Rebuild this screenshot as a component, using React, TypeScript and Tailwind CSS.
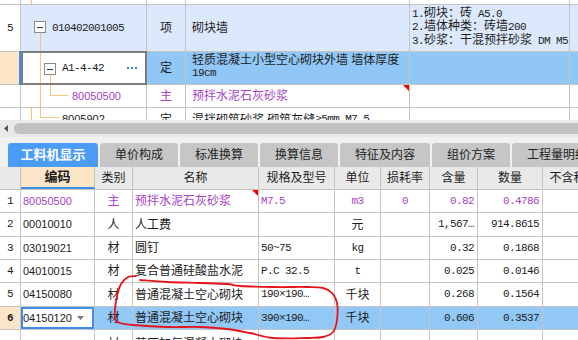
import React from "react";

const line = "border-[#c4c4c4]";
const purple = "text-[#a443c8]";
const mono = "font-['Liberation_Mono','Noto_Sans_CJK_SC',monospace] text-[11px] tracking-[-0.6px]";

function Cell({
  w,
  className = "",
  children,
}: {
  w: string;
  className?: string;
  children?: React.ReactNode;
}) {
  return (
    <div
      className={`${w} relative shrink-0 h-full border-r ${line} flex items-center overflow-hidden whitespace-nowrap ${className}`}
    >
      {children}
    </div>
  );
}

const RedMark = () => (
  <span className="absolute top-0 right-0 w-0 h-0 border-t-[6px] border-l-[6px] border-t-[#f00000] border-l-transparent" />
);

// ---------- top tree grid ----------
const TW = ["w-[21px]", "w-[126px]", "w-[39px]", "w-[224px]", "w-[160px]", "w-[20px]"];

function TreeLines() {
  const c = "#f8c47a";
  return (
    <svg className="absolute left-0 top-0 pointer-events-none" width="150" height="120">
      <line x1="31.5" y1="0" x2="31.5" y2="5" stroke={c} />
      <line x1="31.5" y1="108" x2="31.5" y2="120" stroke={c} />
      <line x1="40.5" y1="33" x2="40.5" y2="117.5" stroke={c} />
      <line x1="40.5" y1="117.5" x2="59" y2="117.5" stroke={c} />
      <line x1="50.5" y1="75" x2="50.5" y2="95.5" stroke={c} />
      <line x1="50.5" y1="95.5" x2="68" y2="95.5" stroke={c} />
      <rect x="34.5" y="21.5" width="11" height="11" fill="#fff" stroke="#8a8a8a" />
      <line x1="37" y1="27.5" x2="43" y2="27.5" stroke="#333" />
      <rect x="44.5" y="63.5" width="11" height="11" fill="#fff" stroke="#8a8a8a" />
      <line x1="47" y1="69.5" x2="53" y2="69.5" stroke="#333" />
    </svg>
  );
}

function TopGrid() {
  return (
    <div className="relative h-[120px] overflow-hidden">
      {/* partial row above */}
      <div className={`flex h-[5px] border-b ${line}`}>
        {TW.map((w, i) => (
          <Cell key={i} w={w} />
        ))}
      </div>
      {/* row 5 */}
      <div className={`flex h-[47px] border-b ${line} bg-[#dce8fb]`}>
        <Cell w={TW[0]} className={`justify-center bg-white ${mono}`}>5</Cell>
        <Cell w={TW[1]} className={`pl-[31px] ${mono}`}>010402001005</Cell>
        <Cell w={TW[2]} className="justify-center">项</Cell>
        <Cell w={TW[3]} className="pl-[6px]">砌块墙</Cell>
        <Cell w={TW[4]} className="pl-[2px] font-['Liberation_Mono','Noto_Sans_CJK_SC',monospace]">
          <div className="leading-[13.5px]">
            <div><span className={mono}>1.</span>砌块：砖<span className={mono}> A5.0</span></div>
            <div><span className={mono}>2.</span>墙体种类：砖墙<span className={mono}>200</span></div>
            <div><span className={mono}>3.</span>砂浆：干混预拌砂浆<span className={mono}> DM M5</span></div>
          </div>
        </Cell>
        <Cell w={TW[5]} />
      </div>
      {/* A1-4-42 */}
      <div className={`flex h-[33px] border-b ${line} bg-[#91c7f6]`}>
        <Cell w={TW[0]} className="bg-[#fde6c8]" />
        <Cell w={TW[1]} className={`pl-[41px] pr-[9px] bg-white ${mono}`}>
          A1-4-42
          <span className="ml-auto flex gap-[2px]">
            <span className="w-[2px] h-[2px] bg-[#3a8be3]" />
            <span className="w-[2px] h-[2px] bg-[#3a8be3]" />
            <span className="w-[2px] h-[2px] bg-[#3a8be3]" />
          </span>
        </Cell>
        <Cell w={TW[2]} className="justify-center">定</Cell>
        <Cell w={TW[3]} className="pl-[6px] items-start pt-[2px] overflow-visible">
          <div className="leading-[13px]">
            <div>轻质混凝土小型空心砌块外墙 墙体厚度</div>
            <div className={mono}>19cm</div>
          </div>
        </Cell>
        <Cell w={TW[4]} />
        <Cell w={TW[5]} />
      </div>
      {/* 80050500 */}
      <div className={`flex h-[23px] border-b ${line}`}>
        <Cell w={TW[0]} />
        <Cell w={TW[1]} className={`pl-[51px] ${purple} font-['Liberation_Sans'] text-[11px]`}>80050500</Cell>
        <Cell w={TW[2]} className={`justify-center ${purple}`}>主</Cell>
        <Cell w={TW[3]} className={`pl-[6px] ${purple}`}>
          预拌水泥石灰砂浆
          <RedMark />
        </Cell>
        <Cell w={TW[4]} />
        <Cell w={TW[5]} />
      </div>
      {/* 8005902 partial, cut by the scroll bar */}
      <div className="flex h-[23px]">
        <Cell w={TW[0]} />
        <Cell w={TW[1]} className="pl-[41px] font-['Liberation_Sans'] text-[11px]">8005902</Cell>
        <Cell w={TW[2]} className="justify-center">定</Cell>
        <Cell w={TW[3]} className="pl-[6px] overflow-visible">
          混拌砌筑砂浆 砌筑灰缝<span className={mono}>≥5mm M7.5</span>
        </Cell>
        <Cell w={TW[4]} />
        <Cell w={TW[5]} />
      </div>
      <TreeLines />
      {/* selected cell frame */}
      <div className="absolute left-[21px] top-[51px] w-[126px] h-[34px] border-2 border-[#7d7d7d] pointer-events-none" />
      <div className="absolute left-[19px] top-[51px] w-[2px] h-[34px] bg-[#3f8ff0] pointer-events-none" />
    </div>
  );
}

// ---------- scroll + tabs ----------
function ScrollBar() {
  return (
    <div className="h-[17px] bg-[#e9e9e9] flex items-center">
      <svg className="ml-[4px]" width="4" height="7">
        <path d="M4 0 L0 3.5 L4 7 Z" fill="#555" />
      </svg>
      <div className="ml-[6px] h-[11px] flex-1 rounded-l-full bg-[#c1c1c1]" />
    </div>
  );
}

const tabs = [
  { label: "工料机显示", w: "w-[90px]", active: true },
  { label: "单价构成", w: "w-[78px]" },
  { label: "标准换算", w: "w-[78px]" },
  { label: "换算信息", w: "w-[78px]" },
  { label: "特征及内容", w: "w-[90px]" },
  { label: "组价方案", w: "w-[78px]" },
  { label: "工程量明细", w: "w-[90px]" },
];

function Tabs() {
  return (
    <div className="bg-[#f1f1f1] pt-[6px]">
      <div className="flex gap-[2px] pl-[8px] h-[24px] overflow-hidden">
        {tabs.map((t) => (
          <div
            key={t.label}
            className={`${t.w} shrink-0 h-full rounded-t-[3px] flex items-center justify-center ${
              t.active ? "bg-[#4a9cf6] text-white font-bold text-[13px]" : "bg-[#c6c6c6] text-[#222]"
            }`}
          >
            {t.label}
          </div>
        ))}
      </div>
    </div>
  );
}

// ---------- bottom grid ----------
const BW = ["w-[21px]", "w-[74px]", "w-[38px]", "w-[126px]", "w-[76px]", "w-[46px]", "w-[49px]", "w-[48px]", "w-[65px]", "w-[50px]"];

const heads = ["", "编码", "类别", "名称", "规格及型号", "单位", "损耗率", "含量", "数量", "不含税"];

type Row = {
  n: string;
  code: string;
  kind: string;
  name: string;
  spec: string;
  unit: string;
  loss: string;
  qty: string;
  amt: string;
  h: string;
};

const rows: Row[] = [
  { n: "1", code: "80050500", kind: "主", name: "预拌水泥石灰砂浆", spec: "M7.5", unit: "m3", loss: "0", qty: "0.82", amt: "0.4786", h: "h-[23px]" },
  { n: "2", code: "00010010", kind: "人", name: "人工费", spec: "", unit: "元", loss: "", qty: "1,567…", amt: "914.8615", h: "h-[24px]" },
  { n: "3", code: "03019021", kind: "材", name: "圆钉", spec: "50~75", unit: "kg", loss: "", qty: "0.32", amt: "0.1868", h: "h-[23px]" },
  { n: "4", code: "04010015", kind: "材", name: "复合普通硅酸盐水泥", spec: "P.C 32.5", unit: "t", loss: "", qty: "0.025", amt: "0.0146", h: "h-[23px]" },
  { n: "5", code: "04150080", kind: "材", name: "普通混凝土空心砌块", spec: "190×190…", unit: "千块", loss: "", qty: "0.268", amt: "0.1564", h: "h-[24px]" },
  { n: "6", code: "04150120", kind: "材", name: "普通混凝土空心砌块", spec: "390×190…", unit: "千块", loss: "", qty: "0.606", amt: "0.3537", h: "h-[23px]" },
];

function HeaderRow() {
  return (
    <div className={`flex h-[23px] border-b ${line} bg-[#e9e9e9]`}>
      {heads.map((h, i) => (
        <Cell
          key={i}
          w={BW[i]}
          className={`justify-center ${i === 1 ? "bg-[#fde6c8] font-bold text-[13px] border-b-2 border-b-[#3d8eea]" : ""}`}
        >
          {h}
        </Cell>
      ))}
    </div>
  );
}

function DataRow({ r }: { r: Row }) {
  const p = r.n === "1" ? purple : "";
  const sel = r.n === "6";
  return (
    <div className={`flex ${r.h} border-b ${line} ${sel ? "bg-[#92c8f6]" : ""}`}>
      <Cell
        w={BW[0]}
        className={`justify-center ${mono} ${sel ? "bg-[#fde6c8] font-bold" : "bg-white"}`}
      >
        {r.n}
      </Cell>
      <Cell w={BW[1]} className={`pl-[2px] font-['Liberation_Sans'] text-[11px] ${p} ${sel ? "bg-white" : ""}`}>
        {r.code}
        {sel && (
          <>
            <span className="absolute inset-0 border-2 border-[#3d8eea]" />
            <svg className="absolute left-[56px] top-[9px]" width="7" height="4">
              <path d="M0 0 L7 0 L3.5 4 Z" fill="#777" />
            </svg>
          </>
        )}
      </Cell>
      <Cell w={BW[2]} className={`justify-center ${p}`}>{r.kind}</Cell>
      <Cell w={BW[3]} className={`pl-[2px] ${p}`}>
        {r.name}
        {r.n === "1" && <RedMark />}
      </Cell>
      <Cell w={BW[4]} className={`pl-[2px] ${mono} ${p}`}>{r.spec}</Cell>
      <Cell w={BW[5]} className={`justify-center ${/[a-z]/.test(r.unit) ? mono : ""} ${p}`}>{r.unit}</Cell>
      <Cell w={BW[6]} className={`justify-center ${mono} ${p}`}>{r.loss}</Cell>
      <Cell w={BW[7]} className={`justify-end pr-[3px] ${mono} ${p}`}>{r.qty}</Cell>
      <Cell w={BW[8]} className={`justify-end pr-[3px] ${mono} ${p}`}>{r.amt}</Cell>
      <Cell w={BW[9]} />
    </div>
  );
}

// next row, only its top few pixels show
function CutRow() {
  return (
    <div className="flex h-[23px]">
      {BW.map((w, i) => (
        <Cell key={i} w={w} className={`items-start pt-[5px] ${i === 2 ? "justify-center" : "pl-[2px]"}`}>
          {i === 2 ? "材" : i === 3 ? "蒸压加气混凝土砌块" : ""}
        </Cell>
      ))}
    </div>
  );
}

// ---------- red hand-drawn ring ----------
const ring: [number, number][] = [
  [136, 276], [128, 277], [121, 284], [117, 296], [115, 309], [115, 319], [120, 323],
  [133, 325], [167, 327], [200, 327], [227, 329], [250, 333], [273, 338], [307, 338],
  [323, 337], [333, 332], [337, 320], [337, 303], [332, 293], [323, 288], [307, 287],
  [273, 287], [240, 286], [227, 284], [200, 283], [167, 282], [140, 280],
];

function smooth(p: [number, number][]) {
  let d = `M${p[0][0]} ${p[0][1]}`;
  for (let i = 0; i < p.length - 1; i++) {
    const p0 = p[i - 1] ?? p[i];
    const p1 = p[i];
    const p2 = p[i + 1];
    const p3 = p[i + 2] ?? p2;
    const c1x = p1[0] + (p2[0] - p0[0]) / 6;
    const c1y = p1[1] + (p2[1] - p0[1]) / 6;
    const c2x = p2[0] - (p3[0] - p1[0]) / 6;
    const c2y = p2[1] - (p3[1] - p1[1]) / 6;
    d += ` C${c1x} ${c1y} ${c2x} ${c2y} ${p2[0]} ${p2[1]}`;
  }
  return d;
}

export default function App() {
  return (
    <div className="relative w-[578px] h-[340px] overflow-hidden bg-white text-[12px] text-[#1c1c1c] font-['Liberation_Sans','Noto_Sans_CJK_SC',sans-serif]">
      <TopGrid />
      <ScrollBar />
      <Tabs />
      <HeaderRow />
      {rows.map((r) => (
        <DataRow key={r.n} r={r} />
      ))}
      <CutRow />
      <svg className="absolute left-0 top-0 pointer-events-none" width="578" height="340">
        <path d={smooth(ring)} fill="none" stroke="#e5141c" strokeWidth="1.8" strokeLinecap="round" />
      </svg>
    </div>
  );
}
